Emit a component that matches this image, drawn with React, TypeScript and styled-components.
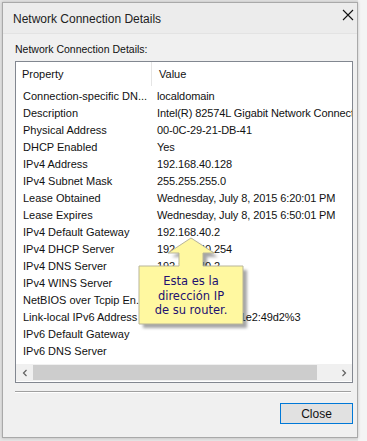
import React from "react";
import styled, { createGlobalStyle } from "styled-components";

const Global = createGlobalStyle`
  html, body { margin: 0; padding: 0; }
  body {
    width: 367px; height: 441px; overflow: hidden;
    background: #d9d9d9;
    font-family: "Liberation Sans", Arial, sans-serif;
  }
`;

const Screen = styled.div`
  width: 367px; height: 441px;
  display: flex;
  padding: 2px 9px 3px 2px;
  box-sizing: border-box;
  background: linear-gradient(to right, #e4e4e4 0, #e4e4e4 358px, #f4f4f4 358px);
`;

const Dialog = styled.div`
  flex: 1;
  display: flex; flex-direction: column;
  background: #f0f0f0;
  border: 1px solid #a9a9a9;
  box-shadow: 0 0 3px rgba(0,0,0,0.2);
`;

const TitleBar = styled.div`
  height: 30px;
  display: flex; align-items: center; justify-content: space-between;
  padding: 0 3px 0 10px;
  background: #ececec;
  border-bottom: 1px solid #e3e3e3;
`;

const Title = styled.span`
  font-size: 12px; color: #222; margin-top: 2px;
`;

const CloseX = styled.svg`
  width: 12px; height: 12px; margin-top: -7px;
`;

const Body = styled.div`
  flex: 1;
  display: flex; flex-direction: column;
  padding: 9px 4px 0 12px;
`;

const Label = styled.div`
  font-size: 10.5px; color: #111; height: 13px; line-height: 13px;
  margin-bottom: 5px;
`;

const ListBox = styled.div`
  position: relative;
  width: 336px; height: 320px;
  border: 1px solid #828790;
  background: #fff;
  display: flex; flex-direction: column;
  overflow: hidden;
`;

const HeaderRow = styled.div`
  display: grid; grid-template-columns: 136px 1fr;
  height: 24px;
`;

const HeaderCell = styled.div<{ $sep?: boolean }>`
  font-size: 11px; color: #111;
  padding-left: ${p => (p.$sep ? "6px" : "7px")};
  display: flex; align-items: center;
  border-right: ${p => (p.$sep ? "1px solid #e5e5e5" : "none")};
`;

const Rows = styled.div`
  flex: 1; padding-top: 1px;
`;

const Row = styled.div`
  display: grid; grid-template-columns: 135px 1fr;
  height: 17px; align-items: center;
  font-size: 11px; color: #111; white-space: nowrap;
`;

const Cell = styled.div<{ $value?: boolean }>`
  padding-left: ${p => (p.$value ? "6px" : "7px")};
  letter-spacing: ${p => (p.$value ? "-0.1px" : "0")};
  overflow: hidden;
`;

const HScroll = styled.div`
  height: 17px; display: flex; align-items: center;
  background: #f0f0f0;
  margin-bottom: 1px;
`;

const Arrow = styled.div`
  width: 17px; height: 17px; display: flex; align-items: center; justify-content: center;
`;

const Track = styled.div`
  flex: 1; height: 15px; display: flex;
`;

const Thumb = styled.div`
  width: 284px; height: 15px; background: #cdcdcd;
`;

const Separator = styled.div`
  width: 336px; height: 1px; background: #a0a0a0;
  border-bottom: 1px solid #fff;
  margin-top: 8px;
`;

const Footer = styled.div`
  display: flex; justify-content: flex-end;
  padding-top: 10px; width: 338px;
`;

const Button = styled.button`
  width: 73px; height: 21px;
  background: #e1e1e1;
  border: 1px solid #0078d7;
  font-family: "Liberation Sans", Arial, sans-serif;
  font-size: 12px; color: #111;
  padding: 0;
`;

const Callout = styled.div`
  position: absolute;
  left: 122px; top: 175px;
  width: 112px; height: 94px;
`;

const CalloutShape = styled.svg`
  position: absolute; left: 0; top: 0;
`;

const CalloutText = styled.div`
  position: absolute;
  left: 1px; top: 37px; width: 104px;
  text-align: center;
  font-family: "DejaVu Sans", Tahoma, sans-serif;
  font-size: 11.5px; line-height: 14.5px;
  color: #221070;
`;

const rows: [string, string][] = [
  ["Connection-specific DN...", "localdomain"],
  ["Description", "Intel(R) 82574L Gigabit Network Connection"],
  ["Physical Address", "00-0C-29-21-DB-41"],
  ["DHCP Enabled", "Yes"],
  ["IPv4 Address", "192.168.40.128"],
  ["IPv4 Subnet Mask", "255.255.255.0"],
  ["Lease Obtained", "Wednesday, July 8, 2015 6:20:01 PM"],
  ["Lease Expires", "Wednesday, July 8, 2015 6:50:01 PM"],
  ["IPv4 Default Gateway", "192.168.40.2"],
  ["IPv4 DHCP Server", "192.168.40.254"],
  ["IPv4 DNS Server", "192.168.40.2"],
  ["IPv4 WINS Server", ""],
  ["NetBIOS over Tcpip En...", "Yes"],
  ["Link-local IPv6 Address", "fe80::5c1b:8f3a:c1e2:49d2%3"],
  ["IPv6 Default Gateway", ""],
  ["IPv6 DNS Server", ""],
];

const shape = "M53 1 L76 16 L65 16 L65 29 L105 29 L105 87 L1 87 L1 29 L41 29 L41 16 L30 16 Z";

export default function App() {
  return (
    <>
      <Global />
      <Screen>
        <Dialog>
          <TitleBar>
            <Title>Network Connection Details</Title>
            <CloseX viewBox="0 0 12 12">
              <path d="M1 1 L11 11 M11 1 L1 11" stroke="#111" strokeWidth="1.1" fill="none" />
            </CloseX>
          </TitleBar>
          <Body>
            <Label>Network Connection Details:</Label>
            <ListBox>
              <HeaderRow>
                <HeaderCell $sep>Property</HeaderCell>
                <HeaderCell>Value</HeaderCell>
              </HeaderRow>
              <Rows>
                {rows.map(([k, v]) => (
                  <Row key={k}>
                    <Cell>{k}</Cell>
                    <Cell $value>{v}</Cell>
                  </Row>
                ))}
              </Rows>
              <HScroll>
                <Arrow>
                  <svg width="8" height="8" viewBox="0 0 8 8">
                    <path d="M5.5 1 L2.5 4 L5.5 7" stroke="#606060" strokeWidth="1.2" fill="none" />
                  </svg>
                </Arrow>
                <Track>
                  <Thumb />
                </Track>
                <Arrow>
                  <svg width="8" height="8" viewBox="0 0 8 8">
                    <path d="M2.5 1 L5.5 4 L2.5 7" stroke="#606060" strokeWidth="1.2" fill="none" />
                  </svg>
                </Arrow>
              </HScroll>
              <Callout>
                <CalloutShape width="112" height="94" viewBox="0 0 112 94">
                  <defs>
                    <filter id="sh" x="-10%" y="-10%" width="130%" height="130%">
                      <feGaussianBlur stdDeviation="1.6" />
                    </filter>
                  </defs>
                  <path d={shape} fill="rgba(0,0,0,0.35)" transform="translate(4 4)" filter="url(#sh)" />
                  <path d={shape} fill="#fff8a0" stroke="#b8b59a" strokeWidth="1" />
                </CalloutShape>
                <CalloutText>
                  Esta es la
                  <br />
                  dirección IP
                  <br />
                  de su router.
                </CalloutText>
              </Callout>
            </ListBox>
            <Separator />
            <Footer>
              <Button>Close</Button>
            </Footer>
          </Body>
        </Dialog>
      </Screen>
    </>
  );
}
